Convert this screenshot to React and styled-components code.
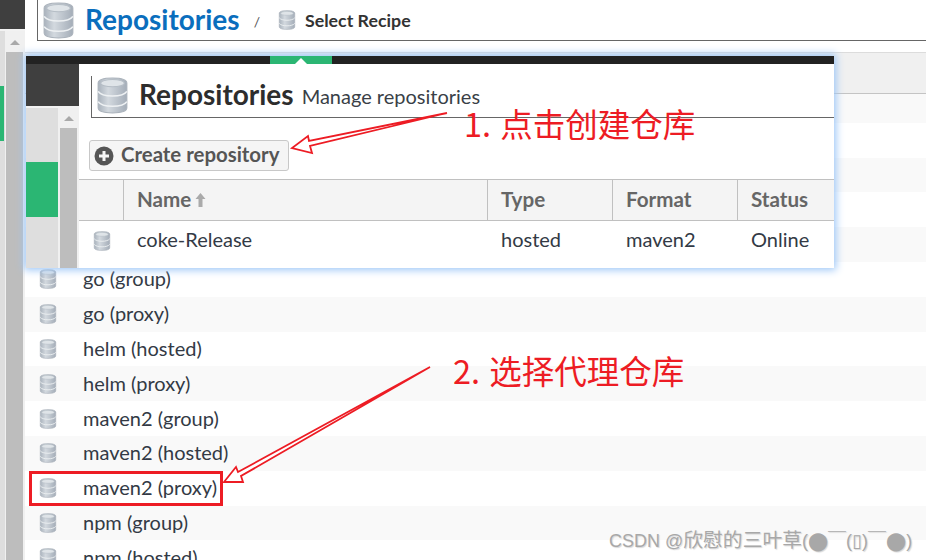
import React from 'react'
import styled, { createGlobalStyle } from 'styled-components'

const GlobalStyle = createGlobalStyle`
  html, body {
    margin: 0;
    padding: 0;
    background: #fff;
  }
  * {
    box-sizing: border-box;
  }
`

const uiFont = `'Lato', 'Open Sans', sans-serif`
const cjkFont = `'Noto Sans CJK SC', 'Liberation Sans', sans-serif`
const red = '#ed1c24'

const Page = styled.div`
  position: relative;
  width: 926px;
  height: 560px;
  overflow: hidden;
  display: flex;
  font-family: ${uiFont};
  color: #333a45;
  background: #fff;
`

const NavColumn = styled.div`
  display: flex;
  flex-direction: column;
  width: ${p => p.$width}px;
  flex: none;
`

const NavTop = styled.div`
  height: ${p => p.$height}px;
  background: #3f3f3f;
  flex: none;
  border-bottom: 2px solid #f2f2f2;
`

const NavBody = styled.div`
  flex: 1;
  display: flex;
  min-height: 0;
`

const NavList = styled.div`
  width: ${p => p.$width}px;
  flex: none;
  background: #dedede;
  padding-top: ${p => p.$activeTop}px;
`

const NavActive = styled.div`
  height: 55px;
  background: #2bb673;
  margin-right: ${p => p.$inset}px;
`

const ScrollTrack = styled.div`
  flex: 1;
  background: #f0f0f0;
  display: flex;
  flex-direction: column;
  align-items: center;
  padding: ${p => p.$top}px 2px 0 ${p => p.$left}px;
  gap: 7px;
`

const ScrollArrow = styled.div`
  width: 0;
  height: 0;
  flex: none;
  border-left: 5px solid transparent;
  border-right: 5px solid transparent;
  border-bottom: 5px solid #a9a9a9;
`

const ScrollThumb = styled.div`
  flex: 1;
  align-self: stretch;
  background: #bdbdbd;
`

const Content = styled.div`
  flex: 1;
  min-width: 0;
  display: flex;
  flex-direction: column;
`

const TopArea = styled.div`
  height: 53px;
  flex: none;
  padding: 0 0 12px 12px;
  border-bottom: 1px solid #dcdcdc;
`

const Breadcrumb = styled.div`
  height: 41px;
  display: flex;
  align-items: center;
  padding-left: 5px;
  border-left: 1px solid #666;
  border-bottom: 1px solid #666;
`

const PageTitle = styled.h1`
  margin: -2px 0 0 11px;
  font-size: 28px;
  font-weight: 700;
  color: #0a6ebd;
`

const Slash = styled.span`
  margin: 3px 18px 0 14px;
  font-size: 14px;
  color: #555;
`

const Crumb = styled.span`
  margin: 0 0 0 9px;
  font-size: 17.8px;
  font-weight: 700;
  color: #333;
`

const ListHead = styled.div`
  height: 41px;
  flex: none;
  background: #f0f0f0;
  border-bottom: 1px solid #c4c4c4;
`

const ListViewport = styled.div`
  flex: 1;
  min-height: 0;
  overflow: hidden;
`

const ListInner = styled.div`
  margin-top: -6px;
`

const Row = styled.div`
  height: 34.8px;
  display: flex;
  align-items: center;
  padding-left: 14px;
  font-size: 20px;
  background: ${p => (p.$striped ? '#f9f9f9' : '#fff')};
`

const RowName = styled.span`
  margin: -2px 0 0 26px;
`

const Dialog = styled.div`
  position: absolute;
  left: 26px;
  top: 56px;
  width: 808px;
  height: 212px;
  display: flex;
  flex-direction: column;
  background: #fff;
  box-shadow: 0 0 8px 2px #9cc6f7;
`

const DialogBar = styled.div`
  height: 8px;
  flex: none;
  background: #222;
  padding-left: 244px;
`

const BarTab = styled.div`
  position: relative;
  width: 62px;
  height: 8px;
  background: #2bb673;
  &::after {
    content: '';
    position: absolute;
    left: 25px;
    bottom: 0;
    border-left: 6px solid transparent;
    border-right: 6px solid transparent;
    border-bottom: 6px solid #fff;
  }
`

const DialogBody = styled.div`
  flex: 1;
  min-height: 0;
  display: flex;
`

const DialogMain = styled.div`
  flex: 1;
  min-width: 0;
  display: flex;
  flex-direction: column;
`

const DialogHeading = styled.div`
  margin: 12px 0 0 12px;
  height: 42px;
  flex: none;
  display: flex;
  align-items: center;
  padding: 0 0 3px 5px;
  border-left: 1px solid #666;
  border-bottom: 1px solid #666;
`

const DialogTitle = styled.h2`
  margin: -2px 0 0 11px;
  font-size: 28px;
  font-weight: 700;
  color: #2d2d2d;
`

const DialogSubtitle = styled.span`
  margin: 1px 0 0 8px;
  font-size: 20px;
  color: #3a3f47;
`

const Toolbar = styled.div`
  height: 61px;
  flex: none;
  padding: 22px 0 0 10px;
`

const CreateButton = styled.button`
  width: 200px;
  height: 31px;
  display: flex;
  align-items: center;
  gap: 7px;
  padding: 0 0 4px 4px;
  border: 1px solid #c8c8c8;
  border-radius: 3px;
  background: #f5f5f5;
  font-family: ${uiFont};
  font-size: 20.4px;
  font-weight: 700;
  color: #555;
`

const PlusIcon = styled.svg`
  width: 20px;
  height: 20px;
  flex: none;
  margin-top: 4px;
`

const TableGrid = styled.div`
  display: grid;
  grid-template-columns: 44px 364px 125px 125px 1fr;
`

const TableHead = styled(TableGrid)`
  height: 42px;
  background: #f4f4f4;
  border-top: 1px solid #c0c0c0;
  border-bottom: 1px solid #c0c0c0;
`

const HeadCell = styled.div`
  display: flex;
  align-items: center;
  gap: 4px;
  padding: 0 0 2px 13px;
  font-size: 20.6px;
  font-weight: 700;
  color: #666;
  border-left: ${p => (p.$first ? 'none' : '1px solid #c0c0c0')};
`

const SortArrow = styled.svg`
  width: 11px;
  height: 14px;
  margin-top: 2px;
`

const TableRow = styled(TableGrid)`
  height: 38px;
  align-items: center;
`

const BodyCell = styled.div`
  padding: 0 0 2px 14px;
  font-size: 20px;
  color: #333a45;
`

const IconCell = styled.div`
  display: flex;
  padding: 2px 0 0 14px;
`

const DbSvg = styled.svg`
  flex: none;
  width: ${p => p.$w}px;
  height: ${p => p.$h}px;
`

const Annotations = styled.svg`
  position: absolute;
  left: 0;
  top: 0;
  width: 926px;
  height: 560px;
  pointer-events: none;
`

const Note = styled.div`
  position: absolute;
  left: ${p => p.$x}px;
  top: ${p => p.$y}px;
  font-family: ${cjkFont};
  font-size: 32.5px;
  line-height: 40px;
  word-spacing: 2px;
  color: ${red};
  white-space: nowrap;
`

const Highlight = styled.div`
  position: absolute;
  left: 29px;
  top: 471px;
  width: 194px;
  height: 35px;
  border: 3px solid ${red};
`

const Watermark = styled.div`
  position: absolute;
  left: 609px;
  top: 528px;
  font-family: 'Liberation Sans', 'Noto Sans CJK SC', 'DejaVu Sans', sans-serif;
  font-size: 18px;
  line-height: 24px;
  color: #a8a8a8;
  text-shadow: 1px 1px 1px #d8d8d8;
  white-space: nowrap;
`

const WatermarkName = styled.span`
  font-size: 19.8px;
`

const DbIcon = ({ w = 18, h = 20 }) => (
  <DbSvg $w={w} $h={h} viewBox='0 0 30 36'>
    <defs>
      <linearGradient id='dbBody' x1='0' y1='0' x2='1' y2='0'>
        <stop offset='0' stopColor='#a9b2bc' />
        <stop offset='0.35' stopColor='#d3d9df' />
        <stop offset='1' stopColor='#a4adb8' />
      </linearGradient>
    </defs>
    <path d='M1 6c0-3.5 6-5 14-5s14 1.500 14 5v24c0 3.500-6 5-14 5s-14-1.500-14-5z' fill='url(#dbBody)' stroke='#aab2bb' />
    <ellipse cx='15' cy='6' rx='11.500' ry='3.500' fill='#dfe4e8' stroke='#b5bdc5' />
    <path d='M1 14c2 3 8 4.500 14 4.500s12-1.500 14-4.500M1 24c2 3 8 4.500 14 4.500s12-1.500 14-4.500' fill='none' stroke='#eef1f3' strokeWidth='1.600' />
  </DbSvg>
)

const hiddenRows = 5
const recipes = [
  'go (group)',
  'go (proxy)',
  'helm (hosted)',
  'helm (proxy)',
  'maven2 (group)',
  'maven2 (hosted)',
  'maven2 (proxy)',
  'npm (group)',
  'npm (hosted)'
]

const App = () => {
  return (
    <Page>
      <GlobalStyle />
      <NavColumn $width={25}>
        <NavTop $height={31} />
        <NavBody>
          <NavList $width={5} $activeTop={55}>
            <NavActive $inset={1} />
          </NavList>
          <ScrollTrack $top={9} $left={1}>
            <ScrollArrow />
            <ScrollThumb />
          </ScrollTrack>
        </NavBody>
      </NavColumn>

      <Content>
        <TopArea>
          <Breadcrumb>
            <DbIcon w={31} h={37} />
            <PageTitle>Repositories</PageTitle>
            <Slash>/</Slash>
            <DbIcon />
            <Crumb>Select Recipe</Crumb>
          </Breadcrumb>
        </TopArea>
        <ListHead />
        <ListViewport>
          <ListInner>
            {Array.from({ length: hiddenRows }).map((_, i) => (
              <Row key={i} $striped={i % 2 === 0} />
            ))}
            {recipes.map((name, i) => (
              <Row key={name} $striped={(i + hiddenRows) % 2 === 0}>
                <DbIcon />
                <RowName>{name}</RowName>
              </Row>
            ))}
          </ListInner>
        </ListViewport>
      </Content>

      <Dialog>
        <DialogBar>
          <BarTab />
        </DialogBar>
        <DialogBody>
          <NavColumn $width={53}>
            <NavTop $height={44} />
            <NavBody>
              <NavList $width={32} $activeTop={54}>
                <NavActive $inset={0} />
              </NavList>
              <ScrollTrack $top={8} $left={2}>
                <ScrollArrow />
                <ScrollThumb />
              </ScrollTrack>
            </NavBody>
          </NavColumn>
          <DialogMain>
            <DialogHeading>
              <DbIcon w={31} h={37} />
              <DialogTitle>Repositories</DialogTitle>
              <DialogSubtitle>Manage repositories</DialogSubtitle>
            </DialogHeading>
            <Toolbar>
              <CreateButton>
                <PlusIcon viewBox='0 0 20 20'>
                  <circle cx='10' cy='10' r='9.500' fill='#555' />
                  <path d='M10 5v10M5 10h10' stroke='#f5f5f5' strokeWidth='3' />
                </PlusIcon>
                Create repository
              </CreateButton>
            </Toolbar>
            <TableHead>
              <HeadCell $first />
              <HeadCell>
                Name
                <SortArrow viewBox='0 0 11 14'>
                  <path d='M5.500 0l5 6H7.500v8h-4V6H.5z' fill='#aaa' />
                </SortArrow>
              </HeadCell>
              <HeadCell>Type</HeadCell>
              <HeadCell>Format</HeadCell>
              <HeadCell>Status</HeadCell>
            </TableHead>
            <TableRow>
              <IconCell><DbIcon /></IconCell>
              <BodyCell>coke-Release</BodyCell>
              <BodyCell>hosted</BodyCell>
              <BodyCell>maven2</BodyCell>
              <BodyCell>Online</BodyCell>
            </TableRow>
          </DialogMain>
        </DialogBody>
      </Dialog>

      <Annotations viewBox='0 0 926 560'>
        <polygon points='447,113 309,141 308,136 292,148 312,153 310,146' fill='#fff' stroke={red} strokeWidth='1.800' />
        <polygon points='430,367 238,472 236,467 224,482 243,482 241,476' fill='#fff' stroke={red} strokeWidth='1.800' />
      </Annotations>
      <Note $x={464} $y={103}>1. 点击创建仓库</Note>
      <Note $x={453} $y={350}>2. 选择代理仓库</Note>
      <Highlight />
      <Watermark>CSDN @<WatermarkName>欣慰的三叶草</WatermarkName>(⬤￣(▯)￣⬤)</Watermark>
    </Page>
  )
}

export default App
